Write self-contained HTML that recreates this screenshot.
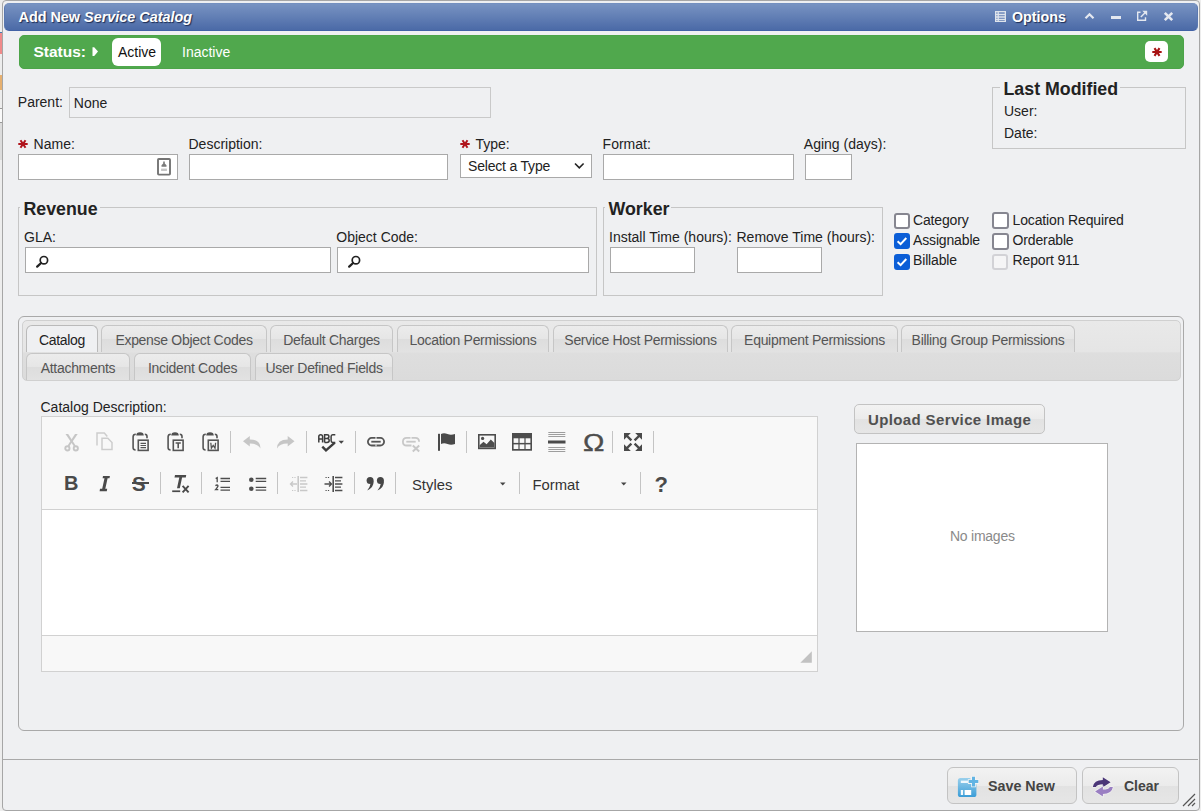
<!DOCTYPE html>
<html><head><meta charset="utf-8">
<style>
*{box-sizing:border-box;margin:0;padding:0}
html,body{width:1201px;height:811px;overflow:hidden;background:#ededed;font-family:"Liberation Sans",sans-serif;font-size:14px;color:#222}
.a{position:absolute}
svg{position:absolute;overflow:visible}
.t{position:absolute;white-space:nowrap;line-height:1}
#dlg{position:absolute;left:2px;top:0;width:1198px;height:811px;background:#eff0f2;border:1px solid #a6a6a6;border-radius:4px}
#title{position:absolute;left:4px;top:2.5px;width:1194px;height:28.5px;border-radius:5px;background:linear-gradient(#7893c2,#4b6aa7);border:1px solid;border-color:#7490c0 #5a78b0 #4262a6 #5a78b0}
.ts{color:#fff;font-weight:bold;text-shadow:1px 1px 1px #1c2c52;letter-spacing:0}
#green{position:absolute;left:18.5px;top:34.5px;width:1165px;height:34px;background:#50a84d;border-radius:5px;border:1px solid #4ca449}
.inp{position:absolute;background:#fff;border:1px solid #a9a9a9}
.fs{position:absolute;border:1px solid #c6c6c6}
.leg{position:absolute;background:#eff0f2;font-weight:bold;font-size:17px;white-space:nowrap;line-height:1;padding:0 2px 0 4px;letter-spacing:0}
.cb{position:absolute;width:16px;height:16px;border:2px solid #868690;border-radius:3px;background:#fff}
.cl{letter-spacing:-0.15px}
.cbc{background:#0b5ed7;border-color:#0b5ed7}
.tab{position:absolute;height:27px;border:1px solid #c6c6c6;border-bottom:none;border-radius:6px 6px 0 0;background:linear-gradient(#ececec 0%,#e6e6e6 48%,#dddddd 52%,#e2e2e2 100%)}
.tab span{position:absolute;left:0;right:0;text-align:center;top:7px;line-height:1;color:#555;white-space:nowrap;letter-spacing:-0.3px}
.tab.act{background:#eff0f2;border-color:#bababa}
.tab.act span{color:#222}
.sep{position:absolute;width:1px;height:22px;background:#c4c4c4;top:431px}
.btn{position:absolute;border:1px solid #c3c3c3;border-radius:6px;background:linear-gradient(#f2f2f2,#ebebeb 50%,#e2e2e2 52%,#e6e6e6)}
.ic{fill:none;stroke:#4d4d4d}
.dis{stroke:#c6c6c6}
</style></head><body>
<div class="a" style="left:0;top:32px;width:2px;height:1px;background:#4a7cb0"></div>
<div class="a" style="left:0;top:33px;width:2px;height:21px;background:#f08a8a"></div>
<div class="a" style="left:0;top:75px;width:2px;height:15px;background:#e6b070"></div>
<div class="a" style="left:0;top:108px;width:2px;height:1px;background:#999"></div>
<div class="a" style="left:0;top:109px;width:2px;height:13px;background:#fafafa"></div>
<div class="a" style="left:0;top:122px;width:2px;height:1px;background:#999"></div>
<div class="a" style="left:0;top:123px;width:2px;height:37px;background:#dcdcdc"></div>
<div id="dlg"></div>
<div id="title"></div>
<div class="t ts" style="left:18.5px;top:10px;font-size:14.4px">Add New <i>Service Catalog</i></div>
<svg style="left:995px;top:11px" width="11" height="11"><g stroke="#dfe4ec" stroke-width="1.3" fill="none"><rect x="0.65" y="0.65" width="9.7" height="9.7"/><path d="M0.6 3.5H10.4M0.6 6H10.4M0.6 8.3H10.4M3.2 0.6V10.4"/></g></svg>
<div class="t ts" style="left:1012px;top:10px;font-size:14.3px">Options</div>
<svg style="left:1084px;top:12px" width="11" height="8"><path d="M1.5 6.3L5.5 2.3L9.5 6.3" stroke="#e4e8f0" stroke-width="2.2" fill="none"/></svg>
<div class="a" style="left:1111px;top:15.5px;width:10px;height:3px;background:#e4e8f0"></div>
<svg style="left:1136px;top:10px" width="12" height="12"><g stroke="#e4e8f0" stroke-width="1.4" fill="none"><path d="M4.5 2.2H1.7V10.3H9.5V7.3"/><path d="M4.8 7L9.8 2"/></g><path d="M6.3 0.8H11.2V5.7Z" fill="#e4e8f0"/></svg>
<svg style="left:1163px;top:11px" width="11" height="11"><path d="M1.8 1.8L9.2 9.2M9.2 1.8L1.8 9.2" stroke="#e4e8f0" stroke-width="2.6" fill="none"/></svg>

<div id="green"></div>
<div class="t" style="left:33.5px;top:44px;font-size:15.5px;font-weight:bold;color:#fff;letter-spacing:0">Status:</div>
<svg style="left:92px;top:47px" width="7" height="10"><path d="M0.5 0.3H2.2L6 4.6L2.2 9H0.5Z" fill="#fff"/></svg>
<div class="a" style="left:112px;top:38px;width:49px;height:28px;background:#fff;border-radius:6px"></div>
<div class="t" style="left:118px;top:45px;color:#111">Active</div>
<div class="t" style="left:182px;top:45px;color:#fff">Inactive</div>
<div class="a" style="left:1145px;top:41px;width:23px;height:21px;background:#fff;border-radius:5px"></div>
<svg style="left:1152px;top:47px" width="10" height="10"><path d="M0.3 5H9.7M2.5 1.2L7.5 8.8M7.5 1.2L2.5 8.8" stroke="#a81414" stroke-width="2.1" fill="none"/></svg>

<div class="t" style="left:17.8px;top:95px">Parent:</div>
<div class="a" style="left:69px;top:87px;width:422px;height:31px;border:1px solid #c9c9c9"></div>
<div class="t" style="left:73.8px;top:96px">None</div>

<div class="fs" style="left:992px;top:87px;width:194px;height:62px"></div>
<div class="leg" style="left:999.5px;top:80.5px;font-size:17.8px">Last Modified</div>
<div class="t" style="left:1004px;top:104px">User:</div>
<div class="t" style="left:1004px;top:126px">Date:</div>

<svg style="left:18px;top:139px" width="10" height="10"><path d="M0.3 5H9.7M2.5 1.2L7.5 8.8M7.5 1.2L2.5 8.8" stroke="#b0141c" stroke-width="2" fill="none"/></svg>
<div class="t" style="left:33.6px;top:137px">Name:</div>
<div class="inp" style="left:18px;top:154px;width:160px;height:26px"></div>
<svg style="left:157px;top:158px" width="14" height="18"><rect x="1" y="1" width="12" height="15.6" rx="0.8" fill="#fff" stroke="#747474" stroke-width="1.9"/><path d="M6.2 3.6H7.8V5.4L9.5 7.3V8.8H4.5V7.3L6.2 5.4Z" fill="#7a7a7a"/><rect x="4.1" y="10.6" width="5.8" height="2.4" fill="#c6c6c6"/></svg>
<div class="t" style="left:188.5px;top:137px">Description:</div>
<div class="inp" style="left:189px;top:154px;width:259px;height:26px"></div>
<svg style="left:460px;top:139px" width="10" height="10"><path d="M0.3 5H9.7M2.5 1.2L7.5 8.8M7.5 1.2L2.5 8.8" stroke="#b0141c" stroke-width="2" fill="none"/></svg>
<div class="t" style="left:475.5px;top:137px">Type:</div>
<div class="inp" style="left:460px;top:154px;width:132px;height:24px"></div>
<div class="t" style="left:468.1px;top:158.5px;letter-spacing:-0.2px">Select a Type</div>
<svg style="left:574px;top:162px" width="11" height="8"><path d="M1 1.5L5.3 5.8L9.6 1.5" stroke="#222" stroke-width="1.6" fill="none"/></svg>
<div class="t" style="left:602.6px;top:137px">Format:</div>
<div class="inp" style="left:603px;top:154px;width:191px;height:26px"></div>
<div class="t" style="left:803.8px;top:137px">Aging (days):</div>
<div class="inp" style="left:805px;top:154px;width:47px;height:26px"></div>

<div class="fs" style="left:18px;top:207px;width:579px;height:89px"></div>
<div class="leg" style="left:19.5px;top:200.5px;font-size:17.8px">Revenue</div>
<div class="t" style="left:24px;top:230px">GLA:</div>
<div class="inp" style="left:25px;top:247px;width:306px;height:26px"></div>
<svg style="left:35px;top:255px" width="14" height="13"><circle cx="8.9" cy="5.2" r="3.7" fill="none" stroke="#222" stroke-width="1.7"/><path d="M6.1 8L2.2 11.6" stroke="#222" stroke-width="2.3" stroke-linecap="round"/></svg>
<div class="t" style="left:336.3px;top:230px">Object Code:</div>
<div class="inp" style="left:337px;top:247px;width:252px;height:26px"></div>
<svg style="left:347px;top:255px" width="14" height="13"><circle cx="8.9" cy="5.2" r="3.7" fill="none" stroke="#222" stroke-width="1.7"/><path d="M6.1 8L2.2 11.6" stroke="#222" stroke-width="2.3" stroke-linecap="round"/></svg>

<div class="fs" style="left:603px;top:207px;width:280px;height:89px"></div>
<div class="leg" style="left:604.5px;top:200.5px;font-size:17.8px">Worker</div>
<div class="t" style="left:609px;top:230px">Install Time (hours):</div>
<div class="inp" style="left:610px;top:247px;width:85px;height:26px"></div>
<div class="t" style="left:736.5px;top:230px">Remove Time (hours):</div>
<div class="inp" style="left:737px;top:247px;width:85px;height:26px"></div>

<div class="cb" style="left:894px;top:213px"></div>
<div class="t cl" style="left:913px;top:213px">Category</div>
<div class="cb cbc" style="left:894px;top:233px"></div>
<svg style="left:894px;top:233px" width="16" height="16"><path d="M3.6 8.2L6.6 11.1L12.3 5" stroke="#fff" stroke-width="2" fill="none"/></svg>
<div class="t cl" style="left:913px;top:233px">Assignable</div>
<div class="cb cbc" style="left:894px;top:254px"></div>
<svg style="left:894px;top:254px" width="16" height="16"><path d="M3.6 8.2L6.6 11.1L12.3 5" stroke="#fff" stroke-width="2" fill="none"/></svg>
<div class="t cl" style="left:913px;top:253px">Billable</div>
<div class="cb" style="left:992px;top:212px;width:17px;height:17px"></div>
<div class="t cl" style="left:1012.6px;top:213px">Location Required</div>
<div class="cb" style="left:992px;top:233px;width:17px;height:17px"></div>
<div class="t cl" style="left:1012.6px;top:233px">Orderable</div>
<div class="cb" style="left:992px;top:254px;border-color:#d2d2d6;background:#f5f5f6"></div>
<div class="t cl" style="left:1012.6px;top:253px">Report 911</div>

<!-- TABS -->
<div class="a" style="left:18px;top:316px;width:1166px;height:415px;border:1px solid #a9a9a9;border-radius:6px"></div>
<div class="a" style="left:22px;top:320px;width:1159px;height:61px;border:1px solid #d0d0d0;border-radius:5px;background:linear-gradient(#e9e9e9 0%,#e5e5e5 52%,#dedede 54%,#dbdbdb 100%)"></div>
<div class="tab act" style="left:26px;top:325px;width:72px"><span>Catalog</span></div>
<div class="tab" style="left:101px;top:325px;width:166px"><span>Expense Object Codes</span></div>
<div class="tab" style="left:270px;top:325px;width:123px"><span>Default Charges</span></div>
<div class="tab" style="left:397px;top:325px;width:152px"><span>Location Permissions</span></div>
<div class="tab" style="left:553px;top:325px;width:175px"><span>Service Host Permissions</span></div>
<div class="tab" style="left:731px;top:325px;width:167px"><span>Equipment Permissions</span></div>
<div class="tab" style="left:901px;top:325px;width:174px"><span>Billing Group Permissions</span></div>
<div class="tab" style="left:26px;top:353px;width:104px"><span>Attachments</span></div>
<div class="tab" style="left:134px;top:353px;width:117px"><span>Incident Codes</span></div>
<div class="tab" style="left:255px;top:353px;width:138px"><span>User Defined Fields</span></div>


<!-- EDITOR -->
<div class="t" style="left:40.5px;top:399.5px">Catalog Description:</div>
<div class="a" style="left:41px;top:416px;width:777px;height:256px;border:1px solid #d1d1d1;background:#f8f8f8"></div>
<div class="a" style="left:42px;top:509px;width:775px;height:127px;background:#fff;border-top:1px solid #d1d1d1;border-bottom:1px solid #d1d1d1"></div>
<svg style="left:800px;top:651px" width="12" height="12"><path d="M11.8 0.3V11.8H0.3Z" fill="#c2c2c2"/></svg>
<div class="sep" style="left:230px"></div><div class="sep" style="left:306px"></div><div class="sep" style="left:355px"></div><div class="sep" style="left:466px"></div><div class="sep" style="left:612px"></div><div class="sep" style="left:653px"></div>
<div class="sep" style="left:160px;top:472px"></div><div class="sep" style="left:201px;top:472px"></div><div class="sep" style="left:277px;top:472px"></div><div class="sep" style="left:354px;top:472px"></div><div class="sep" style="left:395px;top:472px"></div><div class="sep" style="left:519px;top:472px"></div><div class="sep" style="left:640px;top:472px"></div>
<!-- cut -->
<svg style="left:63.5px;top:433.5px" width="16" height="18"><g fill="#c6c6c6"><path d="M1.5 0L4.2 0L11.6 11.4L10 12.6Z"/><path d="M13.7 0L11 0L3.6 11.4L5.2 12.6Z"/></g><g stroke="#c6c6c6" fill="none" stroke-width="1.9"><circle cx="3.4" cy="14.4" r="2.1"/><circle cx="11.8" cy="14.4" r="2.1"/></g></svg>
<!-- copy -->
<svg style="left:96.3px;top:432.2px" width="17" height="19"><g stroke="#cdcdcd" fill="none" stroke-width="1.5"><path d="M1 13.5V1H8.3L11.3 4.5"/><path d="M6 6.3H11.8L16 10.5V17.6H6Z"/></g></svg>
<!-- paste x3 -->
<svg style="left:132.2px;top:432px" width="17" height="19"><g stroke="#555" fill="none" stroke-width="1.6"><path d="M3.8 2.2Q1.1 2.2 1.1 4.8V15.8Q1.1 18 3.6 18"/><path d="M12.8 2.2Q15 2.2 15 4.6V6.2"/><rect x="6.3" y="8.2" width="9.8" height="10.2" fill="#f8f8f8"/><path d="M8.5 11.3H14M8.5 13.5H14M8.5 15.7H14" stroke-width="1.2"/></g><path d="M4.2 3.6Q4.2 0.2 8 0.2Q11.8 0.2 11.8 3.6Z" fill="#505050"/></svg>
<svg style="left:167.2px;top:432px" width="17" height="19"><g stroke="#555" fill="none" stroke-width="1.6"><path d="M3.8 2.2Q1.1 2.2 1.1 4.8V15.8Q1.1 18 3.6 18"/><path d="M12.8 2.2Q15 2.2 15 4.6V6.2"/><rect x="6.3" y="8.2" width="9.8" height="10.2" fill="#f8f8f8"/><path d="M8.6 11H13.8M11.2 11V16.3" stroke-width="1.6"/></g><path d="M4.2 3.6Q4.2 0.2 8 0.2Q11.8 0.2 11.8 3.6Z" fill="#505050"/></svg>
<svg style="left:202.3px;top:432px" width="17" height="19"><g stroke="#555" fill="none" stroke-width="1.6"><path d="M3.8 2.2Q1.1 2.2 1.1 4.8V15.8Q1.1 18 3.6 18"/><path d="M12.8 2.2Q15 2.2 15 4.6V6.2"/><rect x="6.3" y="8.2" width="9.8" height="10.2" fill="#f8f8f8"/><path d="M8.8 10.8L9.4 16.2L11.2 13.4L13 16.2L13.6 10.8" stroke-width="1.3"/></g><path d="M4.2 3.6Q4.2 0.2 8 0.2Q11.8 0.2 11.8 3.6Z" fill="#505050"/></svg>
<!-- undo redo -->
<svg style="left:242.5px;top:435.5px" width="18" height="13"><path d="M0 5.2L6.8 0V3.4Q17.5 3.4 17.5 12.6Q15 7.6 6.8 7.6V10.6Z" fill="#c6c6c6"/></svg>
<svg style="left:276.8px;top:435.5px" width="18" height="13"><path d="M17.5 5.2L10.7 0V3.4Q0 3.4 0 12.6Q2.5 7.6 10.7 7.6V10.6Z" fill="#c6c6c6"/></svg>
<!-- spellcheck -->
<svg style="left:318px;top:434px" width="27" height="19"><path d="M0.8 8.6V2.6Q0.8 0.7 2.7 0.7Q4.6 0.7 4.6 2.6V8.6M0.8 5H4.6M6.6 8.6V0.8H9Q10.9 0.8 10.9 2.5Q10.9 4.4 9 4.4H6.6M9 4.4Q11.2 4.4 11.2 6.5Q11.2 8.4 9 8.4H6.6M17.3 0.8H14.6Q13.1 0.8 13.1 2.6V6.6Q13.1 8.4 14.6 8.4H17.3" stroke="#3d3d3d" stroke-width="1.5" fill="none"/><path d="M4.3 12.6L8 16.4L16.8 8.6" stroke="#3d3d3d" stroke-width="2.4" fill="none"/><path d="M20.5 6.8H26L23.25 9.8Z" fill="#444"/></svg>
<!-- link -->
<svg style="left:367px;top:437px" width="18" height="10"><rect x="0.9" y="0.9" width="16.2" height="7.6" rx="3.8" fill="none" stroke="#555" stroke-width="1.8"/><path d="M4.3 4.7H13.7" stroke="#555" stroke-width="1.8"/><path d="M9 0V2M9 7.4V9.4" stroke="#f8f8f8" stroke-width="1"/></svg>
<svg style="left:402px;top:437px" width="19" height="15"><g stroke="#c8c8c8" fill="none" stroke-width="1.8"><path d="M9.5 8.5H4.7Q0.9 8.5 0.9 4.7Q0.9 0.9 4.7 0.9H13.3Q17.1 0.9 17.1 4.7"/><path d="M4.3 4.7H13.7"/><path d="M10.8 8.4L17.2 14.4M17.2 8.4L10.8 14.4" stroke-width="2"/></g><path d="M9 0V2" stroke="#f8f8f8" stroke-width="1"/></svg>
<!-- anchor -->
<svg style="left:438px;top:433px" width="18" height="18"><rect x="0" y="0.8" width="2" height="17" fill="#4a4a4a"/><path d="M3 1Q6 -0.4 9.5 1.1Q13 2.4 17 1V11Q13 12.5 9.5 11Q6 9.6 3 11Z" fill="#4a4a4a"/></svg>
<!-- image -->
<svg style="left:478px;top:434.4px" width="18" height="16"><rect x="0.8" y="0.8" width="16.4" height="13.6" fill="none" stroke="#4d4d4d" stroke-width="1.6"/><circle cx="4.6" cy="4.4" r="1.6" fill="#4d4d4d"/><path d="M1.6 13.6V11.2L5.5 7.8L8.6 10.2L12.8 5.6L16.4 9V13.6Z" fill="#4d4d4d"/></svg>
<!-- table -->
<svg style="left:512px;top:433px" width="20" height="18"><rect x="0" y="0" width="20" height="17.7" fill="#4d4d4d"/><g fill="#f8f8f8"><rect x="1.6" y="5.3" width="4.8" height="4.6"/><rect x="7.6" y="5.3" width="4.8" height="4.6"/><rect x="13.6" y="5.3" width="4.8" height="4.6"/><rect x="1.6" y="11.4" width="4.8" height="4.6"/><rect x="7.6" y="11.4" width="4.8" height="4.6"/><rect x="13.6" y="11.4" width="4.8" height="4.6"/></g></svg>
<!-- hr -->
<svg style="left:548.3px;top:432px" width="18" height="20"><path d="M0.3 0.5H17.3M0.3 2.5H17.3M0.3 4.5H17.3M0.3 15.5H17.3M0.3 17.5H17.3M0.3 19.5H17.3" stroke="#9e9e9e" stroke-width="1"/><path d="M0 10H17.5" stroke="#4a4a4a" stroke-width="3"/></svg>
<!-- omega -->
<div class="t" style="left:583px;top:431px;font-family:'Liberation Sans';font-size:24.5px;color:#4d4d4d;letter-spacing:0;-webkit-text-stroke:0.4px #4d4d4d;transform:scaleX(1.17);transform-origin:0 0">Ω</div>
<!-- maximize -->
<svg style="left:624px;top:433px" width="18" height="18"><g fill="#4a4a4a"><path d="M0 0H6.8L0 6.8Z"/><path d="M18 0H11.2L18 6.8Z"/><path d="M0 18H6.8L0 11.2Z"/><path d="M18 18H11.2L18 11.2Z"/></g><path d="M2 2L7.4 7.4M16 2L10.6 7.4M2 16L7.4 10.6M16 16L10.6 10.6" stroke="#4a4a4a" stroke-width="2.4"/></svg>
<!-- row2 -->
<div class="t" style="left:64px;top:473px;font-weight:bold;font-size:20px;color:#4a4a4a;letter-spacing:0">B</div>
<svg style="left:98.5px;top:475.5px" width="11" height="16"><path d="M4 0H10.9L10.5 2.3H8.6L6.3 12.8H8.2L7.8 15.2H0.6L1 12.8H3.2L5.5 2.3H3.6Z" fill="#4a4a4a"/></svg>
<div class="t" style="left:132px;top:474px;font-weight:bold;font-size:20.5px;color:#4a4a4a;letter-spacing:0">S</div>
<div class="a" style="left:131.5px;top:482px;width:17px;height:1.8px;background:#4a4a4a"></div>
<svg style="left:172px;top:475px" width="18" height="18"><path d="M3 0H14.2L13.8 2.5H10.1L7.8 13.2H5L7.3 2.5H2.5Z" fill="#4a4a4a"/><rect x="0.2" y="15.4" width="8" height="1.7" fill="#4a4a4a"/><path d="M10.6 10.8L16.6 17.4M16.6 10.8L10.6 17.4" stroke="#4a4a4a" stroke-width="1.9"/></svg>
<!-- numlist -->
<svg style="left:214.7px;top:477.2px" width="16" height="15"><path d="M0.7 1.6L2.2 0.6V5.2M0.4 8.6Q2.6 7.2 3 9Q2.5 10.6 0.6 12.6H3.3" stroke="#4d4d4d" stroke-width="1.3" fill="none"/><path d="M5.5 1.5H15M5.5 4.3H15M5.5 10.3H15M5.5 13.1H15" stroke="#4d4d4d" stroke-width="1.3"/></svg>
<!-- bullist -->
<svg style="left:248.8px;top:477.2px" width="18" height="15"><circle cx="2.3" cy="2.7" r="2.3" fill="#4d4d4d"/><circle cx="2.3" cy="11.7" r="2.3" fill="#4d4d4d"/><path d="M6.7 1.5H17.2M6.7 4.3H17.2M6.7 10.3H17.2M6.7 13.1H17.2" stroke="#4d4d4d" stroke-width="1.3"/></svg>
<!-- outdent -->
<svg style="left:288.8px;top:475.5px" width="19" height="16"><g stroke="#c8c8c8" fill="none"><path d="M9.2 0V16" stroke-width="1.6"/><path d="M11 1.5H18.4M11 4.8H17M11 8H18.4M11 11.2H17M11 14.5H18.4" stroke-width="1.3"/><path d="M3 1.5H7M3 14.5H7" stroke-width="1.2" stroke-dasharray="1.2 1.2"/><path d="M8 8H1.5M4 5.5L1.5 8L4 10.5" stroke-width="1.3"/></g></svg>
<!-- indent -->
<svg style="left:323.8px;top:475.5px" width="19" height="16"><g stroke="#4d4d4d" fill="none"><path d="M9.2 0V16" stroke-width="1.6"/><path d="M11 1.5H18.4M11 4.8H17M11 8H18.4M11 11.2H17M11 14.5H18.4" stroke-width="1.3"/><path d="M1.5 1.5H5.5M1.5 14.5H5.5" stroke-width="1.2" stroke-dasharray="1.2 1.2"/><path d="M0.5 8H7.5M5 5.5L7.5 8L5 10.5" stroke-width="1.3"/></g></svg>
<!-- blockquote -->
<svg style="left:365.5px;top:477px" width="20" height="14"><g fill="#464646"><circle cx="4.1" cy="3.6" r="3.5"/><path d="M7.6 4Q7.9 10.6 1.2 13.4Q4 10.2 4.4 6.9Z"/><circle cx="14.4" cy="3.6" r="3.5"/><path d="M17.9 4Q18.2 10.6 11.5 13.4Q14.3 10.2 14.7 6.9Z"/></g></svg>
<div class="t" style="left:412px;top:478px;font-size:14.8px;color:#333;letter-spacing:0">Styles</div>
<svg style="left:500px;top:482px" width="6" height="4"><path d="M0 0.5H5.5L2.75 3.5Z" fill="#444"/></svg>
<div class="t" style="left:532.5px;top:478px;font-size:14.8px;color:#333;letter-spacing:0">Format</div>
<svg style="left:621px;top:482px" width="6" height="4"><path d="M0 0.5H5.5L2.75 3.5Z" fill="#444"/></svg>
<div class="t" style="left:654.5px;top:474px;font-weight:bold;font-size:22px;color:#4a4a4a;letter-spacing:0">?</div>


<div class="btn" style="left:854px;top:404px;width:191px;height:30px;border-radius:5px"></div>
<div class="t" style="left:868px;top:412px;font-weight:bold;font-size:15px;color:#505050;letter-spacing:0.37px">Upload Service Image</div>
<div class="a" style="left:856px;top:443px;width:252px;height:189px;background:#fff;border:1px solid #b3b3b3"></div>
<div class="t" style="left:950px;top:529px;color:#8a8a8a;font-size:14px;letter-spacing:-0.25px">No images</div>

<div class="a" style="left:3px;top:759px;width:1195px;height:1px;background:#a9a9a9"></div>
<div class="btn" style="left:947px;top:767px;width:130px;height:37px"></div>
<svg style="left:957px;top:776px" width="22" height="22"><defs><linearGradient id="sg" x1="0" y1="0" x2="0" y2="1"><stop offset="0" stop-color="#9ad0ec"/><stop offset="1" stop-color="#3b9dd7"/></linearGradient></defs><path d="M0.9 4.6Q0.9 2 3.5 2H12.8L19.4 8.6V18.4Q19.4 21 16.8 21H3.5Q0.9 21 0.9 18.4Z" fill="url(#sg)"/><rect x="3.8" y="4.6" width="7.6" height="2.4" fill="#eef8fd"/><rect x="3.8" y="14" width="2.3" height="5" fill="#f4fafd"/><rect x="7.6" y="14" width="6.6" height="5" fill="#fff"/><path d="M15 0.8H18V4.1H21.3V7.1H18V10.4H15V7.1H11.7V4.1H15Z" fill="#62b4e3" stroke="#f4f4f4" stroke-width="1.6" paint-order="stroke"/></svg>
<div class="t" style="left:988px;top:779px;font-weight:bold;font-size:14.3px;color:#444;letter-spacing:0">Save New</div>
<div class="btn" style="left:1082px;top:767px;width:97px;height:37px"></div>
<svg style="left:1092px;top:777px" width="22" height="21"><path d="M0.8 10Q1.8 3.2 10.8 3V0.3L18.6 5.3L10.8 10.3V7.3Q5.2 7.3 3.9 10Z" fill="#4b3677" stroke="#f4f4f4" stroke-width="1.2" paint-order="stroke"/><path d="M20.9 9.9Q19.9 16.7 10.9 16.9V19.6L3.1 14.6L10.9 9.6V12.6Q16.5 12.6 17.8 9.9Z" fill="#9a7fc2" stroke="#f4f4f4" stroke-width="1.2" paint-order="stroke"/></svg>
<div class="t" style="left:1124px;top:779px;font-weight:bold;font-size:14px;color:#444;letter-spacing:0">Clear</div>
<svg style="left:1181px;top:792px" width="16" height="16"><path d="M2 14L14 2M7 14L14 7M11 14L14 11" stroke="#555" stroke-width="1.2" fill="none"/></svg>
</body></html>
